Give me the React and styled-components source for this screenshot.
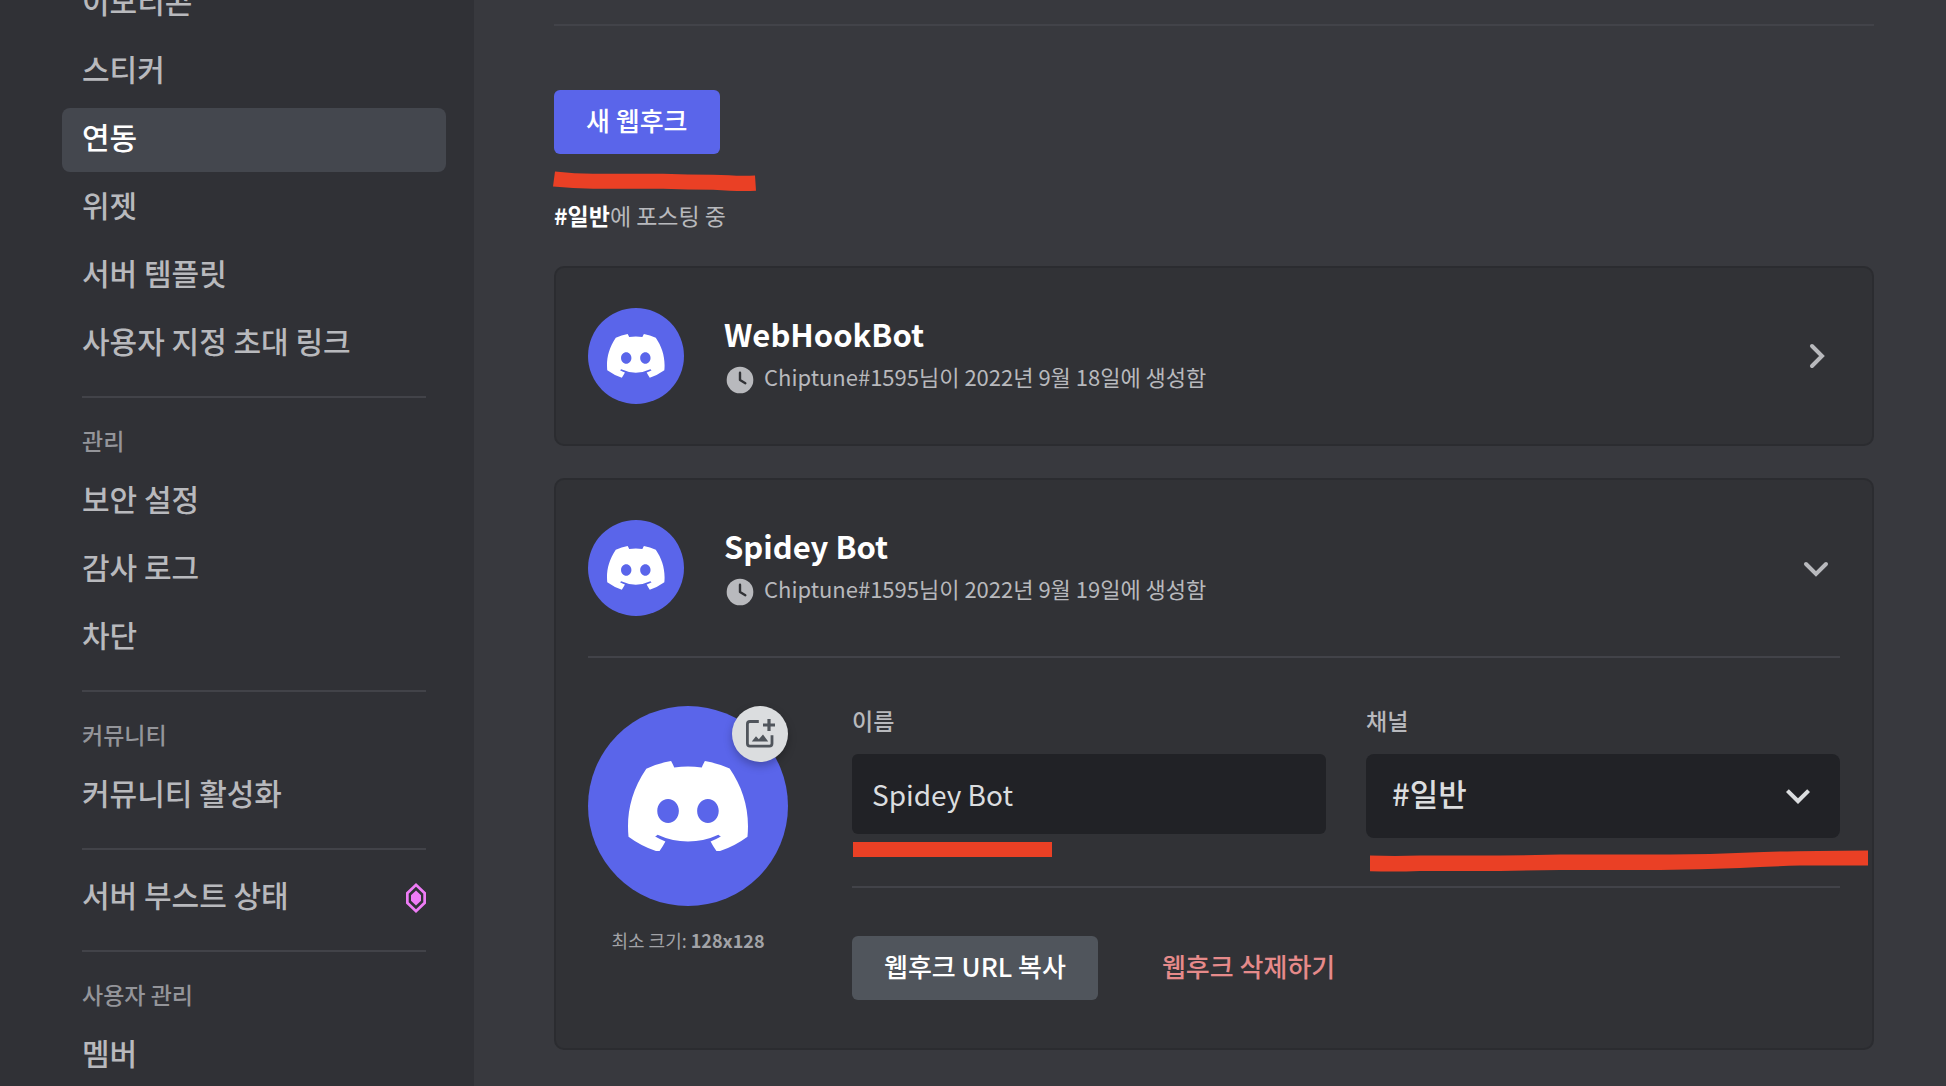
import React, { useState } from 'react';
import styled, { createGlobalStyle, css } from 'styled-components';

const color = {
  page: '#38393e',
  panel: '#303136',
  card: '#313236',
  cardBorder: '#2b2c30',
  field: '#212226',
  selected: '#44474e',
  line: '#424349',
  text: '#dbdddf',
  muted: '#b8b9bd',
  faint: '#94959a',
  accent: '#5a65ea',
  gray: '#50555c',
  danger: '#e68a8a',
  boost: '#ee7cf6',
  marker: '#ea4025',
};

const GlobalStyle = createGlobalStyle`
  *, *::before, *::after { box-sizing: border-box; }
  body {
    margin: 0;
    background: ${color.page};
    color: ${color.text};
    font-family: 'Noto Sans CJK KR', 'Noto Sans', sans-serif;
  }
  button, input, select { font-family: inherit; }
`;

const Layout = styled.div`
  display: flex;
  height: 100vh;
  overflow: hidden;
`;

/* Sidebar */

const Sidebar = styled.nav`
  display: flex;
  flex-direction: column;
  justify-content: flex-end;
  flex: 0 0 474px;
  margin-bottom: -2px;
  padding: 0 28px 0 62px;
  background: ${color.panel};
`;

const NavGroup = styled.div`
  flex: none;
  padding-bottom: ${(p) => (p.$last ? 0 : 20)}px;
`;

const NavDivider = styled.hr`
  flex: none;
  height: 2px;
  margin: 0 20px 16px;
  border: 0;
  background: ${color.line};
`;

const NavHeading = styled.h2`
  margin: 0;
  padding: 10px 20px 14px;
  color: ${color.faint};
  font-size: 23px;
  font-weight: 500;
  line-height: 32px;
`;

const NavList = styled.ul`
  display: flex;
  flex-direction: column;
  gap: 4px;
  margin: 0;
  padding: 0;
  list-style: none;
`;

const NavLink = styled.a`
  display: flex;
  align-items: center;
  justify-content: space-between;
  height: 64px;
  padding: 0 20px;
  border-radius: 8px;
  color: ${color.muted};
  font-size: 30px;
  font-weight: 500;
  line-height: 40px;
  text-decoration: none;
  ${(p) =>
    p.$active &&
    css`
      background: ${color.selected};
      color: #fff;
    `}
`;

const NavLabel = styled.span`
  padding-bottom: 8px;
`;

/* Main column */

const Main = styled.main`
  flex: 1;
  min-width: 0;
  padding: 24px 72px 0 80px;
`;

const Divider = styled.hr`
  height: 2px;
  margin: 0;
  border: 0;
  background: ${color.line};
`;

const Toolbar = styled.div`
  position: relative;
  display: flex;
  padding-top: 64px;
`;

const Button = styled.button`
  height: 64px;
  padding: 0 32px 4px;
  border: 0;
  border-radius: 6px;
  background: ${(p) => (p.$tone === 'gray' ? color.gray : p.$tone === 'link' ? 'transparent' : color.accent)};
  color: ${(p) => (p.$tone === 'link' ? color.danger : '#fff')};
  font-size: 26px;
  font-weight: 500;
  line-height: 36px;
  cursor: pointer;
`;

const Posting = styled.p`
  margin: 0;
  padding: 44px 0 34px;
  color: ${color.muted};
  font-size: 23px;
  line-height: 34px;

  strong {
    color: #fff;
    font-weight: 700;
  }
`;

const CardList = styled.div`
  display: flex;
  flex-direction: column;
  gap: 32px;
`;

const Card = styled.section`
  padding: 0 32px;
  border: 2px solid ${color.cardBorder};
  border-radius: 10px;
  background: ${color.card};
`;

const CardHeader = styled.header`
  display: flex;
  align-items: center;
  gap: 40px;
  padding: 40px 0;
`;

const Avatar = styled.span`
  display: grid;
  place-items: center;
  flex: none;
  width: ${(p) => p.$size}px;
  height: ${(p) => p.$size}px;
  border-radius: 50%;
  background: ${color.accent};

  svg {
    display: block;
    width: 60%;
  }
`;

const Summary = styled.div`
  flex: 1;
  min-width: 0;
  padding-bottom: 4px;
`;

const Name = styled.h3`
  margin: 0;
  color: #fff;
  font-size: 31px;
  font-weight: 700;
  line-height: 44px;
`;

const Created = styled.p`
  display: flex;
  align-items: flex-end;
  gap: 8px;
  margin: 0;
  padding-top: 4px;
  color: ${color.muted};
  font-size: 22px;
  line-height: 32px;

  svg {
    flex: none;
  }
`;

const CreatedText = styled.span`
  padding-bottom: 4px;
`;

const IconButton = styled.button`
  display: block;
  width: 48px;
  height: 48px;
  padding: 0;
  border: 0;
  background: none;
  color: ${color.muted};
  cursor: pointer;

  svg {
    display: block;
  }
`;

const CardBody = styled.div`
  display: flex;
  gap: 64px;
  padding: 48px 0;
`;

const AvatarColumn = styled.div`
  flex: 0 0 200px;
`;

const AvatarPicker = styled.div`
  position: relative;
`;

const UploadButton = styled.button`
  position: absolute;
  top: 0;
  right: 0;
  width: 56px;
  height: 56px;
  padding: 0;
  border: 0;
  border-radius: 50%;
  background: #dbdddf;
  box-shadow: 0 4px 8px rgba(0, 0, 0, 0.25);
  color: #50555c;
  cursor: pointer;

  svg {
    display: block;
  }
`;

const Hint = styled.p`
  margin: 0;
  padding-top: 20px;
  color: #a2a3a7;
  font-size: 18px;
  line-height: 28px;
  text-align: center;
  white-space: nowrap;
`;

const Settings = styled.div`
  flex: 1;
  min-width: 0;
`;

const Fields = styled.div`
  display: grid;
  grid-template-columns: 1fr 1fr;
  gap: 40px;
  padding-bottom: 48px;
`;

const Field = styled.div`
  position: relative;
`;

const Label = styled.label`
  display: block;
  padding-bottom: 20px;
  color: ${color.muted};
  font-size: 23px;
  font-weight: 500;
  line-height: 28px;
`;

const TextInput = styled.input`
  display: block;
  width: 100%;
  height: 80px;
  padding: 0 20px;
  border: 0;
  border-radius: 6px;
  background: ${color.field};
  color: ${color.text};
  font-size: 28px;
`;

const SelectBox = styled.div`
  display: grid;
  align-items: center;
  border-radius: 8px;
  background: ${color.field};
  color: ${color.text};

  > * {
    grid-area: 1 / 1;
  }

  svg {
    justify-self: end;
    margin-right: 18px;
    pointer-events: none;
  }
`;

const Select = styled.select`
  width: 100%;
  height: 84px;
  padding: 0 66px 8px 26px;
  border: 0;
  background: transparent;
  color: inherit;
  font-size: 31px;
  font-weight: 500;
  appearance: none;
`;

const Actions = styled.div`
  display: flex;
  gap: 32px;
  padding-top: 48px;
`;

/* Hand-drawn highlights that lie over the page */

const Marker = styled.svg`
  position: absolute;
  top: ${(p) => p.$top};
  left: ${(p) => p.$left}px;
  overflow: visible;
  pointer-events: none;
  fill: ${color.marker};
`;

/* Icons */

const DiscordMark = () => (
  <svg viewBox="0 0 127.14 96.36" fill="#fff" aria-hidden="true">
    <path d="M107.7,8.07A105.15,105.15,0,0,0,81.47,0a72.06,72.06,0,0,0-3.36,6.83A97.68,97.68,0,0,0,49,6.83,72.37,72.37,0,0,0,45.64,0,105.89,105.89,0,0,0,19.39,8.09C2.79,32.65-1.71,56.6.54,80.21h0A105.73,105.73,0,0,0,32.71,96.36,77.7,77.7,0,0,0,39.6,85.25a68.42,68.42,0,0,1-10.85-5.18c.91-.66,1.8-1.34,2.66-2a75.57,75.57,0,0,0,64.32,0c.87.71,1.76,1.39,2.66,2a68.68,68.68,0,0,1-10.87,5.19,77,77,0,0,0,6.89,11.1A105.25,105.25,0,0,0,126.6,80.22h0C129.24,52.84,122.09,29.11,107.7,8.07ZM42.45,65.69C36.18,65.69,31,60,31,53s5-12.74,11.43-12.74S54,46,53.89,53,48.84,65.69,42.45,65.69Zm42.24,0C78.41,65.69,73.25,60,73.25,53s5-12.74,11.44-12.74S96.23,46,96.12,53,91.08,65.69,84.69,65.69Z" />
  </svg>
);

const ClockIcon = () => (
  <svg width="32" height="32" viewBox="0 0 24 24" aria-hidden="true">
    <circle cx="12" cy="12" r="10" fill="currentColor" />
    <path d="M12 6.6V12L16 14.4" fill="none" stroke={color.card} strokeWidth="1.8" strokeLinecap="round" strokeLinejoin="round" />
  </svg>
);

const caretPaths = { right: 'M10 7L15 12L10 17', down: 'M7 10L12 15L17 10' };

const Caret = ({ direction }) => (
  <svg width="48" height="48" viewBox="0 0 24 24" fill="none" stroke="currentColor" strokeWidth="2" strokeLinecap="round" aria-hidden="true">
    <path d={caretPaths[direction]} />
  </svg>
);

const SelectArrow = () => (
  <svg width="48" height="48" viewBox="0 0 24 24" fill="currentColor" aria-hidden="true">
    <path d="M16.59 8.59L12 13.17L7.41 8.59L6 10L12 16L18 10L16.59 8.59Z" />
  </svg>
);

const BoostIcon = () => (
  <svg width="20" height="30" viewBox="0 0 20 30" aria-hidden="true">
    <path fill={color.boost} fillRule="evenodd" d="M10 0L20 9.6V20.4L10 30L0 20.4V9.6ZM10 3.8L2.7 10.8V19.2L10 26.2L17.3 19.2V10.8Z" />
    <path fill={color.boost} d="M10 7.5L15 12.2V17.8L10 22.5L5 17.8V12.2Z" />
  </svg>
);

const ImagePlusIcon = () => (
  <svg width="56" height="56" viewBox="0 0 56 56" aria-hidden="true">
    <path d="M26.8 15.5H18A2.6 2.6 0 0 0 15.4 18.1V37.6A2.6 2.6 0 0 0 18 40.2H37.4A2.6 2.6 0 0 0 40 37.6V29.2" fill="none" stroke="currentColor" strokeWidth="2.8" />
    <path d="M37 13V25M31 19H43" stroke="currentColor" strokeWidth="3.2" />
    <path d="M19.8 35.4L24 30.2L26.8 33.2L31 28.6L36.2 35.4Z" fill="currentColor" />
  </svg>
);

/* Composition */

const NavItem = ({ label, active, children }) => (
  <li>
    <NavLink href="#" $active={active} aria-current={active ? 'page' : undefined}>
      <NavLabel>{label}</NavLabel>
      {children}
    </NavLink>
  </li>
);

const WebhookHeader = ({ name, created, open }) => (
  <CardHeader>
    <Avatar $size={96}>
      <DiscordMark />
    </Avatar>
    <Summary>
      <Name>{name}</Name>
      <Created>
        <ClockIcon />
        <CreatedText>{created}</CreatedText>
      </Created>
    </Summary>
    <IconButton type="button" aria-label={name} aria-expanded={open}>
      <Caret direction={open ? 'down' : 'right'} />
    </IconButton>
  </CardHeader>
);

export default function App() {
  const [name, setName] = useState('Spidey Bot');

  return (
    <Layout>
      <GlobalStyle />
      <Sidebar>
        <NavGroup>
          <NavList>
            <NavItem label="이모티콘" />
            <NavItem label="스티커" />
            <NavItem label="연동" active />
            <NavItem label="위젯" />
            <NavItem label="서버 템플릿" />
            <NavItem label="사용자 지정 초대 링크" />
          </NavList>
        </NavGroup>
        <NavDivider />
        <NavGroup>
          <NavHeading>관리</NavHeading>
          <NavList>
            <NavItem label="보안 설정" />
            <NavItem label="감사 로그" />
            <NavItem label="차단" />
          </NavList>
        </NavGroup>
        <NavDivider />
        <NavGroup>
          <NavHeading>커뮤니티</NavHeading>
          <NavList>
            <NavItem label="커뮤니티 활성화" />
          </NavList>
        </NavGroup>
        <NavDivider />
        <NavGroup>
          <NavList>
            <NavItem label="서버 부스트 상태">
              <BoostIcon />
            </NavItem>
          </NavList>
        </NavGroup>
        <NavDivider />
        <NavGroup $last>
          <NavHeading>사용자 관리</NavHeading>
          <NavList>
            <NavItem label="멤버" />
          </NavList>
        </NavGroup>
      </Sidebar>

      <Main>
        <Divider />
        <Toolbar>
          <Button type="button">새 웹후크</Button>
          <Marker $top="calc(100% + 17px)" $left={-1} width="203" height="21" aria-hidden="true">
            <path d="M2 0.5Q22 2.8 40 2.8H110Q135 3.8 160 3.8C175 4.2 185 5.2 202 4.6L203 19.8Q185 20.6 160 18.8Q135 18.6 110 17.8H40Q20 17.6 0 15.6Z" />
          </Marker>
        </Toolbar>
        <Posting>
          <strong>#일반</strong>에 포스팅 중
        </Posting>
        <CardList>
          <Card>
            <WebhookHeader name="WebHookBot" created="Chiptune#1595님이 2022년 9월 18일에 생성함" open={false} />
          </Card>
          <Card>
            <WebhookHeader name="Spidey Bot" created="Chiptune#1595님이 2022년 9월 19일에 생성함" open />
            <Divider />
            <CardBody>
              <AvatarColumn>
                <AvatarPicker>
                  <Avatar $size={200}>
                    <DiscordMark />
                  </Avatar>
                  <UploadButton type="button" aria-label="이미지 업로드">
                    <ImagePlusIcon />
                  </UploadButton>
                </AvatarPicker>
                <Hint>
                  최소 크기: <b>128x128</b>
                </Hint>
              </AvatarColumn>
              <Settings>
                <Fields>
                  <Field>
                    <Label htmlFor="webhook-name">이름</Label>
                    <TextInput id="webhook-name" value={name} onChange={(e) => setName(e.target.value)} />
                    <Marker $top="136px" $left={1} width="199" height="15" aria-hidden="true">
                      <path d="M0 0H199V15H0Z" />
                    </Marker>
                  </Field>
                  <Field>
                    <Label htmlFor="webhook-channel">채널</Label>
                    <SelectBox>
                      <Select id="webhook-channel">
                        <option>#일반</option>
                      </Select>
                      <SelectArrow />
                    </SelectBox>
                    <Marker $top="144px" $left={4} width="498" height="22" aria-hidden="true">
                      <path d="M0 5.6Q25 6.2 50 5.6H130L190 4.6H300Q340 4.4 380 2.4Q420 0.8 498 0.4V15.6H430Q400 16.2 370 18Q330 19.4 290 20H190L130 21H50Q25 22 0 21.2Z" />
                    </Marker>
                  </Field>
                </Fields>
                <Divider />
                <Actions>
                  <Button type="button" $tone="gray">
                    웹후크 URL 복사
                  </Button>
                  <Button type="button" $tone="link">
                    웹후크 삭제하기
                  </Button>
                </Actions>
              </Settings>
            </CardBody>
          </Card>
        </CardList>
      </Main>
    </Layout>
  );
}
